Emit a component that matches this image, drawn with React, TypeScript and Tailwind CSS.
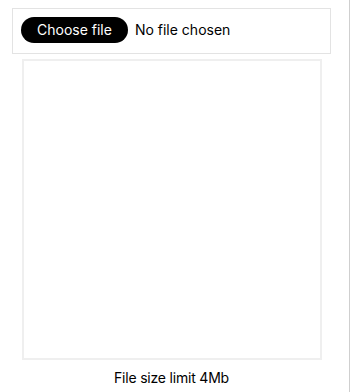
import React from "react";

export default function App() {
  return (
    <div className="w-[350px] h-[392px] bg-white border-r border-[#cfcfcf] font-['Inter',sans-serif] text-black">
      <div className="ml-3 pt-2 w-[319px]">
        <div className="border border-[#e3e3e3] pl-2 pt-2 pb-[10px]">
          <label className="flex items-center cursor-pointer">
            <span className="inline-flex items-center h-[26px] px-4 rounded-full bg-black text-white text-sm leading-5">
              Choose file
            </span>
            <span className="ml-[7px] text-sm leading-5">No file chosen</span>
            <input type="file" className="hidden" />
          </label>
        </div>
        <div className="mx-auto mt-[5px] w-[300px] h-[301px] border-2 border-[#efefef]"></div>
        <p className="mt-2 text-center text-sm leading-5 tracking-[-0.2px]">File size limit 4Mb</p>
      </div>
    </div>
  );
}
